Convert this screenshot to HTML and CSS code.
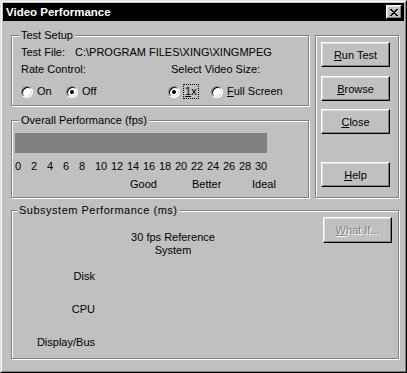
FILE: index.html
```
<html>
	<head>
		<title>Video Performance</title>
		<link rel="stylesheet" href="styles.css">
	</head>
	<body>
		<div class="window">
			<div class="frame">
				<div class="titlebar">
					<span class="title">Video Performance</span>
					<span class="close-btn">
						<svg width="8" height="7" viewBox="0 0 8 7" shape-rendering="crispEdges"><path d="M0 0h2v1H0z M6 0h2v1H6z M1 1h2v1H1z M5 1h2v1H5z M2 2h4v1H2z M3 3h2v1H3z M2 4h4v1H2z M1 5h2v1H1z M5 5h2v1H5z M0 6h2v1H0z M6 6h2v1H6z" fill="#000"/></svg>
					</span>
				</div>
				<div class="content">
					<div class="top">
						<div class="left">
							<div class="group setup">
								<span class="group-title">Test Setup</span>
								<div class="row">
									<span class="file-label">Test File:</span>
									<span>C:\PROGRAM FILES\XING\XINGMPEG</span>
								</div>
								<div class="grid-row">
									<span>Rate Control:</span>
									<span class="size-label">Select Video Size:</span>
								</div>
								<div class="grid-row radios">
									<div class="opts">
										<span class="opt w-on"><span class="radio"></span>On</span>
										<span class="opt"><span class="radio checked"></span>Off</span>
									</div>
									<div class="opts">
										<span class="opt w-1x"><span class="radio checked"></span><span class="focus"><u>1</u>x</span></span>
										<span class="opt"><span class="radio"></span><span><u>F</u>ull Screen</span></span>
									</div>
								</div>
							</div>
							<div class="group overall">
								<span class="group-title">Overall Performance (fps)</span>
								<div class="bar"></div>
								<div class="ticks">
									<span>0</span><span>2</span><span>4</span><span>6</span><span>8</span><span>10</span><span>12</span><span>14</span>
									<span>16</span><span>18</span><span>20</span><span>22</span><span>24</span><span>26</span><span>28</span><span>30</span>
								</div>
								<div class="ratings">
									<span class="good">Good</span>
									<span class="better">Better</span>
									<span>Ideal</span>
								</div>
							</div>
						</div>
						<div class="group buttons">
							<button type="button"><u>R</u>un Test</button>
							<button type="button" class="browse"><u>B</u>rowse</button>
							<button type="button" class="close"><u>C</u>lose</button>
							<button type="button" class="help"><u>H</u>elp</button>
						</div>
					</div>
					<div class="group subsystem">
						<span class="group-title sub-title">Subsystem Performance (ms)</span>
						<div class="sub-main">
							<div class="ref">30 fps Reference<br>System</div>
							<div class="sub-label first">Disk</div>
							<div class="sub-label">CPU</div>
							<div class="sub-label">Display/Bus</div>
						</div>
						<button type="button" class="whatif" disabled><u>W</u>hat If...</button>
					</div>
				</div>
			</div>
		</div>
	</body>
</html>
```
FILE: styles.css
```
body {
  margin: 0;
  background: #c0c0c0;
  font-family: "Liberation Sans", Arial, sans-serif;
  font-size: 11px;
  line-height: 13px;
  color: #000;
}

/* Window frame */
.window {
  width: 407px;
  height: 373px;
  box-sizing: border-box;
  border: 1px solid;
  border-color: #dfdfdf #000 #000 #dfdfdf;
  background: #c0c0c0;
}
.frame {
  height: 100%;
  box-sizing: border-box;
  border: 1px solid;
  border-color: #fff #808080 #808080 #fff;
  padding: 1px;
}

.titlebar {
  height: 18px;
  background: #000;
  color: #fff;
  display: flex;
  align-items: center;
  justify-content: space-between;
  padding: 0 2px 0 3px;
}
.title {
  font-weight: bold;
  font-size: 11.5px;
}
.close-btn {
  width: 16px;
  height: 14px;
  box-sizing: border-box;
  background: #c0c0c0;
  border: 1px solid;
  border-color: #fff #000 #000 #fff;
  box-shadow: inset -1px -1px #808080, inset 1px 1px #dfdfdf;
  display: flex;
  align-items: center;
  justify-content: center;
}

.content {
  padding: 14px 0 0 8px;
}
.top {
  display: flex;
  gap: 6px;
}
.left {
  width: 298px;
}

/* Group boxes */
.group {
  position: relative;
  box-sizing: border-box;
  border: 1px solid #808080;
  box-shadow: inset 1px 1px #fff, 1px 1px #fff;
}
.group-title {
  position: absolute;
  top: -7px;
  left: 7px;
  padding: 0 2px;
  background: #c0c0c0;
}
.sub-title {
  left: 5px;
  letter-spacing: 0.5px;
}

.setup {
  height: 71px;
  padding: 10px 0 0 9px;
}
.row {
  display: flex;
}
.file-label {
  width: 54px;
}
.grid-row {
  display: grid;
  grid-template-columns: 147px auto;
  margin-top: 4px;
}
.size-label {
  padding-left: 3px;
}
.radios {
  margin-top: 9px;
}
.opts {
  display: flex;
}
.opt {
  display: flex;
  align-items: center;
  gap: 4px;
}
.w-on {
  width: 45px;
}
.w-1x {
  width: 43px;
}
.radio {
  position: relative;
  width: 12px;
  height: 12px;
  box-sizing: border-box;
  border-radius: 50%;
  border: 1px solid;
  border-color: #808080 #fff #fff #808080;
  background: #fff;
  box-shadow: inset 1px 1px #000, inset -1px -1px #dfdfdf;
}
.radio.checked::after {
  content: "";
  position: absolute;
  left: 3px;
  top: 3px;
  width: 4px;
  height: 4px;
  border-radius: 50%;
  background: #000;
}
.focus {
  outline: 1px dotted #000;
  padding: 0 1px;
}

.overall {
  height: 78px;
  margin-top: 14px;
  padding: 12px 0 0 3px;
}
.bar {
  width: 252px;
  height: 20px;
  background: #808080;
}
.ticks {
  display: flex;
  margin-top: 7px;
}
.ticks span {
  width: 16px;
  flex: none;
}
.ratings {
  display: flex;
  margin-top: 5px;
  padding-left: 115px;
}
.good {
  width: 62px;
}
.better {
  width: 60px;
}

/* Command buttons */
.buttons {
  width: 84px;
  height: 163px;
  padding: 6px 0 0 5px;
}
button {
  display: block;
  width: 69px;
  height: 25px;
  padding: 0;
  font-family: "Liberation Sans", Arial, sans-serif;
  font-size: 11px;
  color: #000;
  background: #c0c0c0;
  border: 1px solid;
  border-color: #fff #000 #000 #fff;
  box-shadow: inset -1px -1px #808080, inset 1px 1px #dfdfdf;
}
.browse {
  margin-top: 9px;
}
.close {
  margin-top: 8px;
}
.help {
  margin-top: 28px;
}

.subsystem {
  width: 388px;
  height: 149px;
  margin-top: 12px;
  display: flex;
  align-items: flex-start;
}
.sub-main {
  flex: 1;
  padding-top: 20px;
}
.ref {
  width: 130px;
  margin-left: 96px;
  text-align: center;
}
.sub-label {
  width: 83px;
  text-align: right;
  margin-top: 20px;
}
.sub-label.first {
  margin-top: 13px;
}
.whatif {
  height: 26px;
  margin: 6px 6px 0 0;
  color: #808080;
  text-shadow: 1px 1px #fff;
}
```
